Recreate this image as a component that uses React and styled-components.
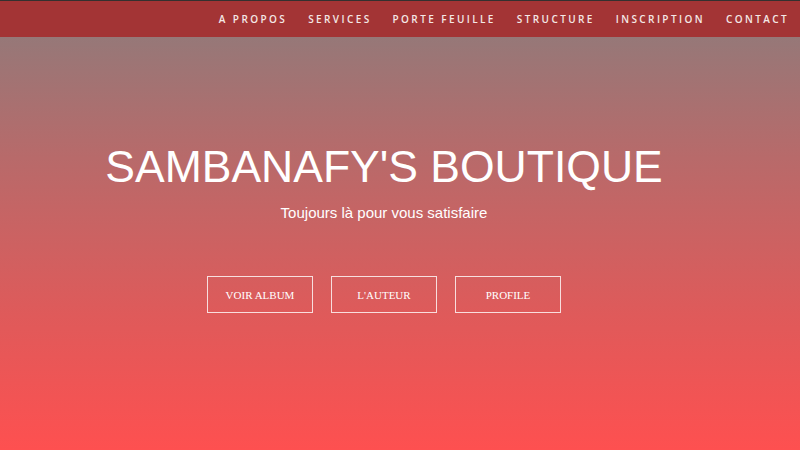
import styled, { createGlobalStyle } from "styled-components";

const Global = createGlobalStyle`
  html, body { margin: 0; padding: 0; }
  body { font-family: "Liberation Sans", Arial, sans-serif; }
`;

const Page = styled.div`
  width: 800px;
  height: 450px;
  overflow: hidden;
  display: flex;
  flex-direction: column;
  border-top: 1px solid #34302f;
  box-sizing: border-box;
  background: linear-gradient(180deg, #8c7c7c 0%, #b86a6a 35%, #df5a5a 70%, #fe5050 100%);
`;

const NavBar = styled.nav`
  height: 36px;
  background: #a33435;
  display: flex;
  align-items: center;
  justify-content: flex-end;
  padding-right: 11px;
  gap: 21px;
`;

const NavLink = styled.a`
  font-family: "Open Sans", sans-serif;
  font-weight: 600;
  font-size: 10px;
  letter-spacing: 2.4px;
  color: #f4e8e6;
  text-transform: uppercase;
  cursor: pointer;
`;

const Hero = styled.section`
  flex: 1;
  display: flex;
  flex-direction: column;
  align-items: center;
  padding-right: 32px;
  padding-top: 103px;
  color: #fff;
`;

const Title = styled.h1`
  margin: 0;
  font-family: "Liberation Sans", Arial, sans-serif;
  font-weight: 400;
  font-size: 44.5px;
  line-height: 54px;
`;

const Subtitle = styled.p`
  margin: 10px 0 0;
  font-family: "Liberation Sans", Arial, sans-serif;
  font-size: 15px;
`;

const Actions = styled.div`
  display: flex;
  gap: 18px;
  margin-top: 55px;
`;

const Button = styled.button`
  width: 106px;
  height: 37px;
  background: transparent;
  border: 1px solid rgba(255, 255, 255, 0.8);
  color: #fff;
  font-family: "Liberation Serif", "Times New Roman", serif;
  font-size: 11px;
  text-transform: uppercase;
  cursor: pointer;
`;

const links = ["A propos", "Services", "Porte feuille", "Structure", "Inscription", "Contact"];
const buttons = ["Voir album", "L'auteur", "Profile"];

export default function App() {
  return (
    <>
      <Global />
      <Page>
        <NavBar>
          {links.map((l) => (
            <NavLink key={l}>{l}</NavLink>
          ))}
        </NavBar>
        <Hero>
          <Title>SAMBANAFY'S BOUTIQUE</Title>
          <Subtitle>Toujours là pour vous satisfaire</Subtitle>
          <Actions>
            {buttons.map((b) => (
              <Button key={b}>{b}</Button>
            ))}
          </Actions>
        </Hero>
      </Page>
    </>
  );
}
